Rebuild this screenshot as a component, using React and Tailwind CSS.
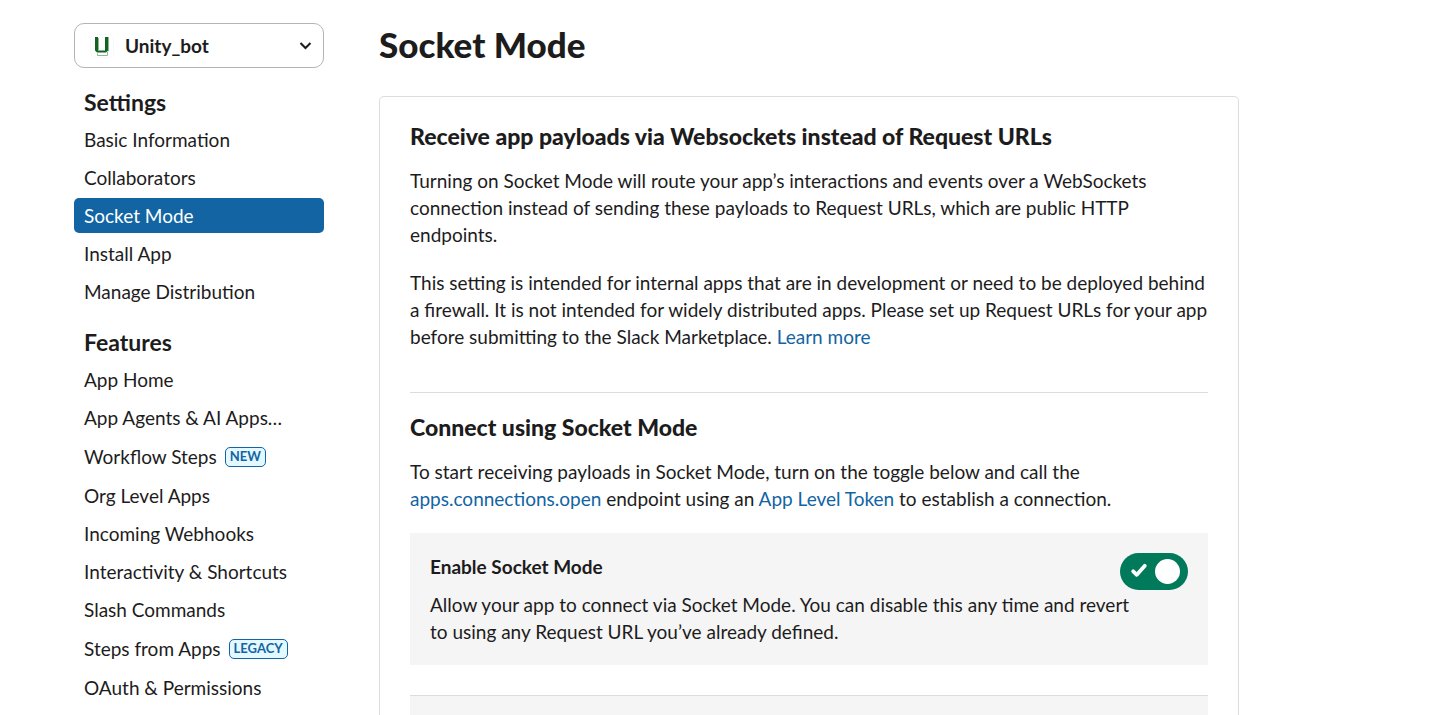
import { useState } from "react";

const settings = [
  { name: "Basic Information" },
  { name: "Collaborators" },
  { name: "Socket Mode", active: true },
  { name: "Install App" },
  { name: "Manage Distribution" },
];

const features = [
  { name: "App Home" },
  { name: "App Agents & AI Apps…" },
  { name: "Workflow Steps", badge: "NEW" },
  { name: "Org Level Apps" },
  { name: "Incoming Webhooks" },
  { name: "Interactivity & Shortcuts" },
  { name: "Slash Commands" },
  { name: "Steps from Apps", badge: "LEGACY" },
  { name: "OAuth & Permissions" },
];

function AppLogo() {
  return (
    <svg
      className="pointer-events-none absolute left-4 top-1/2 size-6 -translate-y-1/2"
      viewBox="0 0 24 24"
      aria-hidden="true"
    >
      <rect x="0.5" y="0.5" width="23" height="23" rx="5" fill="#fff" stroke="#f8f8f8" />
      <path d="M7.500 19.500v2h10v-3.500M18.500 3v14h-1M8.500 4v12" fill="none" stroke="#8fb796" />
      <path d="M5 3h3v13.500h7V3h3v13.500l-2 2H7l-2-2z" fill="#0f6420" />
    </svg>
  );
}

function AppPicker() {
  return (
    <div className="relative">
      <AppLogo />
      <select
        aria-label="App"
        className="h-[45px] w-full appearance-none rounded-[10px] border border-[#b4b4b5] bg-transparent pl-[50px] pr-10 text-[19px] font-bold text-[#1d1c1d]"
      >
        <option>Unity_bot</option>
      </select>
      <svg
        className="pointer-events-none absolute right-3 top-1/2 h-3 w-3 -translate-y-1/2"
        viewBox="0 0 12 12"
        fill="none"
        stroke="#1d1c1d"
        strokeWidth="2"
        aria-hidden="true"
      >
        <path d="M0.500 3L5.500 8L10.500 3" />
      </svg>
    </div>
  );
}

function NavItem({ name, badge, active }) {
  return (
    <li className={badge ? "py-px" : ""}>
      <a
        href="#"
        className={
          active
            ? "flex h-[35px] items-center rounded-[5px] bg-[#1264a3] px-[10px] text-white"
            : "flex h-[35px] items-center px-[10px]"
        }
      >
        {name}
        {badge && (
          <span className="ml-2 flex h-5 items-center rounded-[5px] border border-[#1264a3] bg-[#e3f8ff] px-1 text-[13px] font-bold text-[#1264a3]">
            {badge}
          </span>
        )}
      </a>
    </li>
  );
}

function NavGroup({ title, items }) {
  return (
    <section>
      <h2 className="px-[10px] text-[23px] leading-[27px] font-bold">{title}</h2>
      <ul className="mt-[6px] flex flex-col gap-[3px]">
        {items.map((item) => (
          <NavItem key={item.name} {...item} />
        ))}
      </ul>
    </section>
  );
}

function Toggle({ id, checked, onChange }) {
  return (
    <span className="relative h-[37px] w-[68px] shrink-0">
      <input
        id={id}
        type="checkbox"
        role="switch"
        checked={checked}
        onChange={onChange}
        className="peer block h-full w-full appearance-none rounded-full bg-[#868686] checked:bg-[#007a5a]"
      />
      <span className="pointer-events-none absolute left-2 top-[6px] size-[25px] rounded-full bg-white peer-checked:left-[35px]" />
      <svg
        className="pointer-events-none absolute left-[10px] top-[10px] hidden h-4 w-[18px] peer-checked:block"
        viewBox="0 0 18 16"
        fill="none"
        stroke="#fff"
        strokeWidth="3.800"
        strokeLinecap="round"
        strokeLinejoin="round"
        aria-hidden="true"
      >
        <path d="M3.200 8.300L6.800 11.800L14.800 2.800" />
      </svg>
    </span>
  );
}

function TextLink({ children }) {
  return (
    <a href="#" className="text-[#1264a3]">
      {children}
    </a>
  );
}

function SectionTitle({ children }) {
  return <h2 className="text-[23px] leading-[30px] font-black">{children}</h2>;
}

export default function App() {
  const [enabled, setEnabled] = useState(true);

  return (
    <div className="flex min-h-screen gap-[55px] bg-white pl-[74px] pr-6 font-['Lato',sans-serif] text-[19px] leading-[27px] text-[#1d1c1d]">
      <aside className="w-[250px] shrink-0 pt-[23px]">
        <AppPicker />
        <nav className="mt-[21px] flex flex-col gap-5">
          <NavGroup title="Settings" items={settings} />
          <NavGroup title="Features" items={features} />
        </nav>
      </aside>

      <main className="flex max-w-[860px] min-w-0 flex-1 flex-col pt-[22px]">
        <h1 className="text-[35px] leading-[45px] font-black">Socket Mode</h1>

        <div className="mt-[29px] flex flex-1 flex-col rounded-t-[5px] border border-b-0 border-[#dddddd] px-[30px] pt-6">
          <section>
            <SectionTitle>Receive app payloads via Websockets instead of Request URLs</SectionTitle>
            <p className="mt-4">
              Turning on Socket Mode will route your app’s interactions and events over a
              WebSockets connection instead of sending these payloads to Request URLs, which are
              public HTTP endpoints.
            </p>
            <p className="mt-[21px]">
              This setting is intended for internal apps that are in development or need to be
              deployed behind a firewall. It is not intended for widely distributed apps. Please
              set up Request URLs for your app before submitting to the Slack Marketplace.{" "}
              <TextLink>Learn more</TextLink>
            </p>
          </section>

          <section className="mt-[42px] border-t border-[#dddddd] pt-[19px]">
            <SectionTitle>Connect using Socket Mode</SectionTitle>
            <p className="mt-4">
              To start receiving payloads in Socket Mode, turn on the toggle below and call the{" "}
              <TextLink>apps.connections.open</TextLink> endpoint using an{" "}
              <TextLink>App Level Token</TextLink> to establish a connection.
            </p>
            <div className="mt-[21px] bg-[#f5f5f5] p-5">
              <div className="flex items-start justify-between">
                <label htmlFor="socket-mode" className="font-bold">
                  Enable Socket Mode
                </label>
                <Toggle
                  id="socket-mode"
                  checked={enabled}
                  onChange={(event) => setEnabled(event.target.checked)}
                />
              </div>
              <p className="mt-px max-w-[708px]">
                Allow your app to connect via Socket Mode. You can disable this any time and
                revert to using any Request URL you’ve already defined.
              </p>
            </div>
          </section>

          <section className="mt-[30px] flex-1 border-t border-[#dddddd] bg-[#f5f5f5]" />
        </div>
      </main>
    </div>
  );
}
